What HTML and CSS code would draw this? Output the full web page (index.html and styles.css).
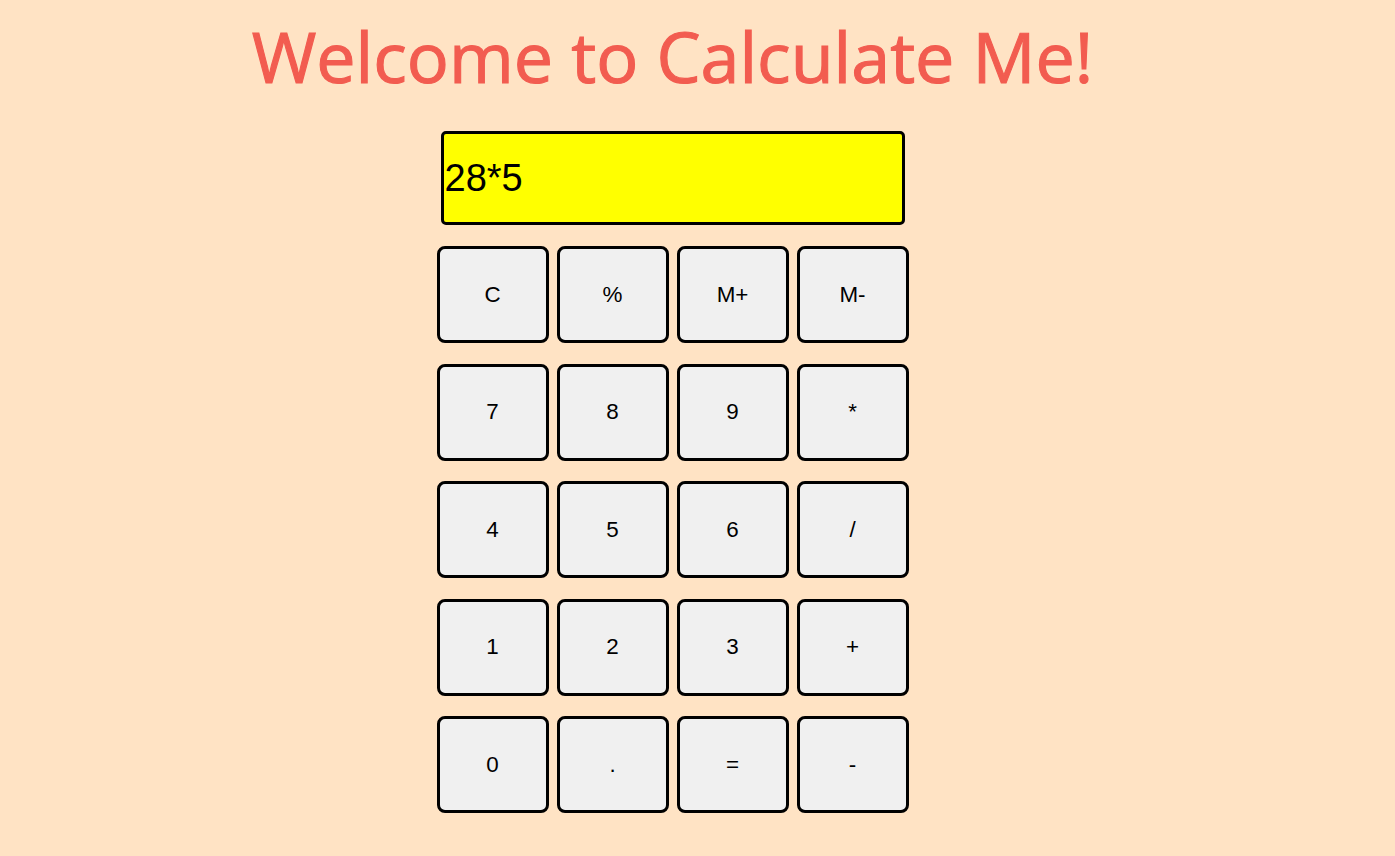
FILE: index.html
```html
<!DOCTYPE html>
<html lang="en">
<head>
<meta charset="utf-8">
<title>Calculate Me</title>
<link rel="stylesheet" href="styles.css">
</head>
<body>
<div class="page">
  <h1 class="title">Welcome to Calculate Me!</h1>
  <div class="calc">
    <div class="display">28*5</div>
    <div class="keys">
      <button class="key">C</button>
      <button class="key">%</button>
      <button class="key">M+</button>
      <button class="key">M-</button>
      <button class="key">7</button>
      <button class="key">8</button>
      <button class="key">9</button>
      <button class="key">*</button>
      <button class="key">4</button>
      <button class="key">5</button>
      <button class="key">6</button>
      <button class="key">/</button>
      <button class="key">1</button>
      <button class="key">2</button>
      <button class="key">3</button>
      <button class="key">+</button>
      <button class="key">0</button>
      <button class="key">.</button>
      <button class="key">=</button>
      <button class="key">-</button>
    </div>
  </div>
</div>
</body>
</html>
```

FILE: styles.css
```css
html, body {
  margin: 0;
  padding: 0;
  background: #ffe3c4;
}

.page {
  width: 1345px;
  display: flex;
  flex-direction: column;
  align-items: center;
}

.title {
  margin: 6px 0 0 0;
  font-family: "Open Sans", sans-serif;
  font-weight: 400;
  font-size: 70px;
  letter-spacing: 0;
  line-height: 100px;
  color: #f25c50;
  -webkit-text-stroke: 1.1px #f25c50;
  white-space: nowrap;
}

.calc {
  display: flex;
  flex-direction: column;
  align-items: center;
  margin-top: 25px;
}

.display {
  box-sizing: border-box;
  width: 464px;
  height: 94px;
  border: 3px solid #000;
  border-radius: 5px;
  background: #ffff00;
  font-family: "Liberation Sans", Arial, sans-serif;
  font-size: 38px;
  color: #000;
  display: flex;
  align-items: center;
  padding-left: 1px;
}

.keys {
  margin-top: 21px;
  display: grid;
  grid-template-columns: repeat(4, 112px);
  column-gap: 8px;
  row-gap: 20.5px;
}

.key {
  box-sizing: border-box;
  width: 112px;
  height: 97px;
  border: 3px solid #000;
  border-radius: 8px;
  background: #f0f0f0;
  font-family: "Liberation Sans", Arial, sans-serif;
  font-size: 22.4px;
  color: #000;
  padding: 0;
}
```
